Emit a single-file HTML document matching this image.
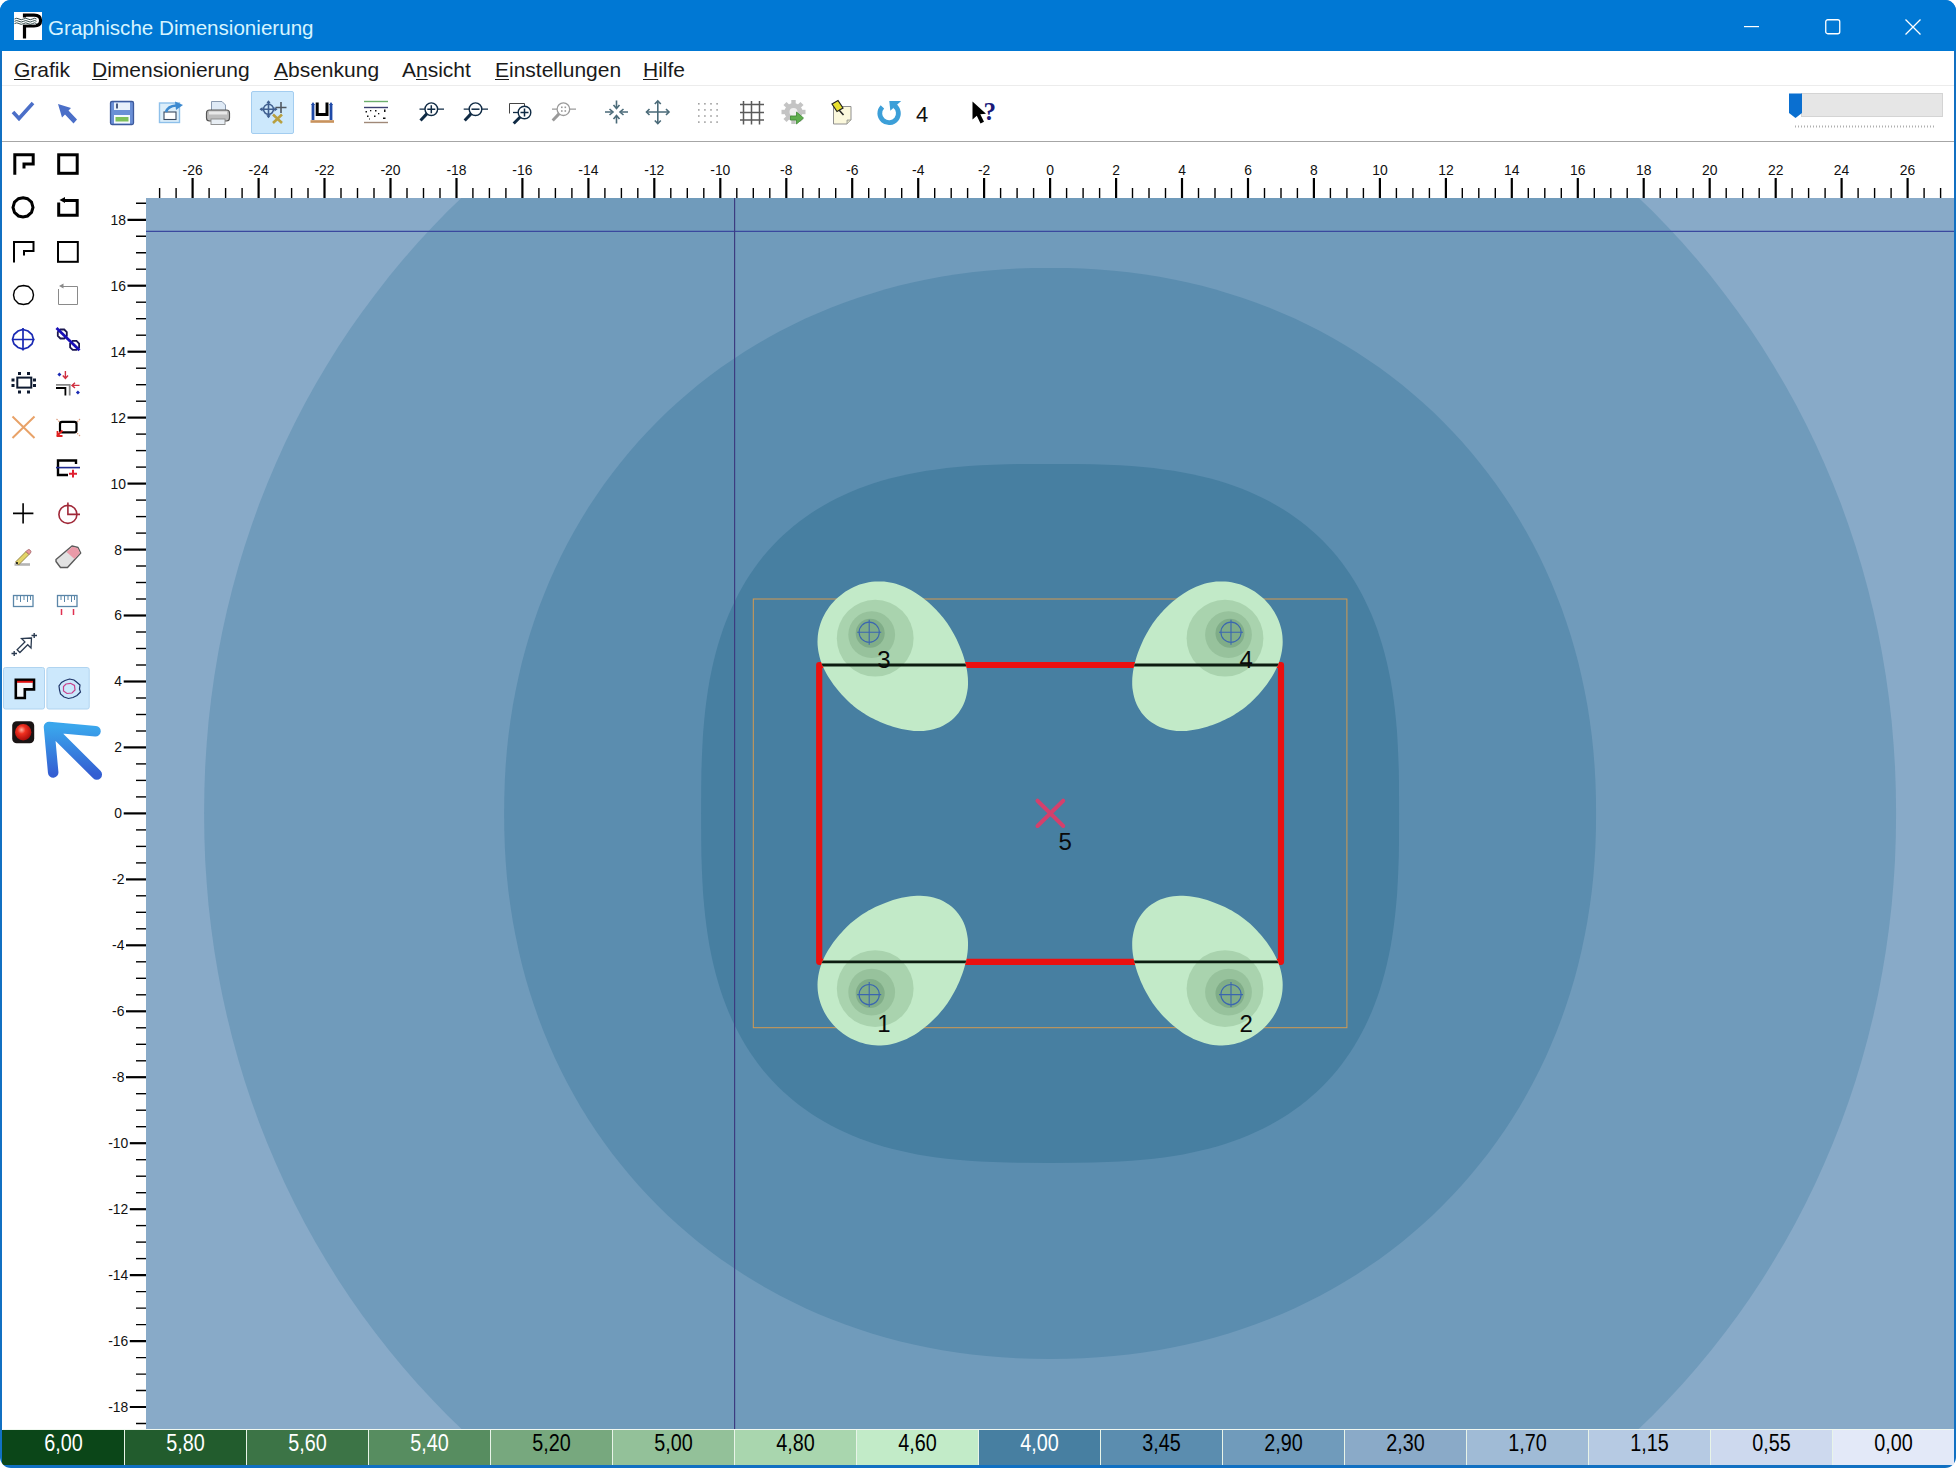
<!DOCTYPE html>
<html><head><meta charset="utf-8"><title>Graphische Dimensionierung</title>
<style>
*{box-sizing:border-box}
html,body{margin:0;padding:0;width:1956px;height:1468px;overflow:hidden;background:#fff;font-family:"Liberation Sans",sans-serif}
.win{position:absolute;left:0;top:0;width:1956px;height:1468px;background:#1170c2;border-radius:11px;overflow:hidden}
.title{position:absolute;left:0;top:0;width:1956px;height:51px;background:#0078d4}
.title .t{position:absolute;left:48px;top:14.5px;font-size:20.6px;color:#d6f4ff;line-height:26px;white-space:nowrap}
.client{position:absolute;left:2px;top:51px;width:1952px;height:1414px;background:#fff}
.menu{position:absolute;left:0;top:0;width:1952px;height:35px;border-bottom:1px solid #ececec}
.menu span{position:absolute;top:5.5px;font-size:21px;color:#1a1a1a;line-height:26px;white-space:nowrap}
.menu u{text-decoration:underline;text-decoration-thickness:1.2px;text-underline-offset:1.6px}
.tb{position:absolute;left:0;top:35px;width:1952px;height:55.5px;border-bottom:1.5px solid #a6a6a6}
svg{position:absolute;overflow:visible}
.lg{position:absolute;top:1430px;height:35px;font-size:23px;line-height:26px;text-align:center;border-left:1px solid #e8f4e8}
.lg span{display:inline-block;transform:scaleX(0.86)}
</style></head><body>
<div class="win">
<div class="title">
<svg style="left:14px;top:12px" width="28" height="28" viewBox="0 0 28 28">
<rect x="0" y="0" width="28" height="28" fill="#fff"/>
<path d="M10.5,26.6 V13.9 H20 Q26.6,13.9 26.6,8.5 Q26.6,3.2 20,3.2 H10.5 V5.5" stroke="#000" stroke-width="3.2" fill="none"/>
<path d="M0,6 H22 V12.5 H0 Z" fill="#fff"/>
<path d="M0.5,7 q2.25,-1.5 4.5,0 t4.5,0 t4.5,0 t4.5,0 t4,0 M0.5,9.3 q2.25,-1.5 4.5,0 t4.5,0 t4.5,0 t4.5,0 t4,0 M0.5,11.6 q2.25,-1.5 4.5,0 t4.5,0 t4.5,0 t4.5,0 t4,0" stroke="#1e3a3a" stroke-width="0.9" fill="none"/>
</svg>
<div class="t">Graphische Dimensionierung</div>
<svg style="left:1744px;top:26px" width="16" height="2"><rect width="15" height="1.2" fill="#fff"/></svg>
<svg style="left:1825px;top:19px" width="16" height="16"><rect x="0.75" y="0.75" width="14" height="14" rx="2" fill="none" stroke="#fff" stroke-width="1.3"/></svg>
<svg style="left:1905px;top:19px" width="16" height="16"><path d="M0.5,0.5 L15.5,15.5 M15.5,0.5 L0.5,15.5" stroke="#fff" stroke-width="1.3"/></svg>
</div>
<div class="client">
<div class="menu">
<span style="left:12px"><u>G</u>rafik</span>
<span style="left:90px"><u>D</u>imensionierung</span>
<span style="left:272px"><u>A</u>bsenkung</span>
<span style="left:400px">A<u>n</u>sicht</span>
<span style="left:493px"><u>E</u>instellungen</span>
<span style="left:641px"><u>H</u>ilfe</span>
</div>
<div class="tb"></div>
</div>


<svg style="left:0;top:0" width="1956" height="150" viewBox="0 0 1956 150">
<!-- check -->
<path d="M13,112 L19,118.5 L33,103" stroke="#4b6fc8" stroke-width="3.6" fill="none" stroke-linejoin="miter"/>
<!-- arrow cursor -->
<path d="M58,104 L71,108 L68.5,110.5 L77,119.5 L73.5,123.5 L65,114.5 L62,117.5 Z" fill="#4b6fc8"/>
<!-- floppy -->
<rect x="110.5" y="101.5" width="23" height="23" rx="1.5" fill="#6a8fd6" stroke="#3d5a9c" stroke-width="1.3"/>
<rect x="114" y="102.5" width="16" height="7.5" fill="#e8f0fa"/>
<rect x="116" y="103.5" width="2" height="5" fill="#4a5a80"/>
<rect x="114" y="115" width="16" height="8.5" fill="#f4f8ff"/>
<rect x="115.5" y="117" width="13" height="4.5" fill="#7ec05a"/>
<!-- export -->
<rect x="159.5" y="103" width="20" height="19.5" fill="#dceefa" stroke="#8ec0ea" stroke-width="1.4"/>
<rect x="164" y="112" width="12" height="7.5" fill="#fff" stroke="#3a4a60" stroke-width="1.1"/>
<path d="M166,112 Q168,106 176,105.5" stroke="#3d8ad0" stroke-width="2.6" fill="none"/>
<path d="M175,101.5 L183,105 L176,110 Z" fill="#3d8ad0"/>
<!-- printer -->
<path d="M211.5,101.5 H222 L225.5,105 V112 H211.5 Z" fill="#dfeaf6" stroke="#8a9ab0" stroke-width="1"/>
<rect x="206.5" y="110" width="23" height="11" rx="3" fill="#bdbdbd" stroke="#555" stroke-width="1.2"/>
<rect x="209" y="111.5" width="18" height="3" fill="#e8e8e8"/>
<rect x="211" y="119" width="14" height="5.5" fill="#e8eef4" stroke="#888" stroke-width="0.9"/>
<!-- selected button -->
<rect x="251.5" y="91.5" width="42" height="42" rx="1.5" fill="#cce8fc" stroke="#a3cdf0" stroke-width="1"/>
<g stroke="#3f5f90" stroke-width="1.6" fill="none"><circle cx="268.5" cy="109.3" r="5"/><path d="M260.5,109.3 H276.5 M268.5,101.3 V117.3"/></g>
<g fill="#3f5f90"><path d="M259.5,109.3 l3,-2.2 v4.4z M277.5,109.3 l-3,-2.2 v4.4z M268.5,100.3 l-2.2,3 h4.4z M268.5,118.3 l-2.2,-3 h4.4z"/></g>
<path d="M275.5,107.5 H286.5 M281,102 V113" stroke="#505860" stroke-width="1.6"/>
<path d="M273,114.5 L282,123 M282,114.5 L273,123" stroke="#b8a040" stroke-width="2.6"/>
<!-- building U -->
<path d="M313,104 V120 M331,104 V120" stroke="#1f4aa8" stroke-width="2.8"/>
<path d="M313,102 l-2,3 h4z M331,102 l-2,3 h4z" fill="#1f4aa8"/>
<path d="M317.2,102.5 V114.5 H327 V102.5" stroke="#000" stroke-width="3" fill="none"/>
<path d="M310.5,121.5 H334" stroke="#c8925c" stroke-width="2.6"/>
<!-- soil -->
<path d="M364,101.5 H388" stroke="#6cae6c" stroke-width="1.4"/>
<path d="M364,107.5 H388" stroke="#3a3e70" stroke-width="1.4"/>
<path d="M364,122.5 H388" stroke="#a08878" stroke-width="1.4"/>
<g fill="#111"><rect x="365.5" y="111" width="1.5" height="1.5"/><rect x="370" y="110" width="1.3" height="1.3"/><rect x="375" y="110" width="1.5" height="1.5"/><rect x="384" y="109.5" width="1.5" height="2.5"/><rect x="367" y="115.5" width="1.5" height="1.5"/><rect x="374" y="115.5" width="1.5" height="1.5"/><rect x="378" y="113" width="1.3" height="1.3"/><rect x="383" y="117.5" width="2.5" height="1.5"/><rect x="369" y="118.5" width="1" height="1"/></g>
<!-- zoom + -->
<g stroke="#0f2a44" fill="none">
<circle cx="431.3" cy="109.2" r="6.3" stroke-width="1.4"/>
<path d="M419.5,109.2 H425 M437.6,109.2 H444" stroke-width="1.3"/>
<path d="M431.3,105.2 V113.2 M427.3,109.2 H435.3" stroke-width="1.5"/>
<path d="M427,113.6 L420.5,120.5" stroke-width="3"/>
</g>
<!-- zoom - -->
<g stroke="#0f2a44" fill="none">
<circle cx="475.5" cy="109.2" r="6.3" stroke-width="1.4"/>
<path d="M463.7,109.2 H469.2 M481.8,109.2 H488" stroke-width="1.3"/>
<path d="M471.5,109.2 H479.5" stroke-width="1.5"/>
<path d="M471.2,113.6 L464.7,120.5" stroke-width="3"/>
</g>
<!-- zoom window -->
<g stroke="#0f2a44" fill="none">
<path d="M509.5,113.5 V103.5 H524.5 V106" stroke-width="1" stroke="#444"/>
<circle cx="524.5" cy="112.5" r="6.3" stroke-width="1.4"/>
<path d="M513,112.5 H518.2" stroke-width="1.3"/>
<path d="M524.5,108.5 V116.5 M520.5,112.5 H528.5" stroke-width="1.5"/>
<path d="M520.2,117 L513.7,123.5" stroke-width="3"/>
</g>
<!-- zoom grey -->
<g stroke="#9a9a9a" fill="none">
<circle cx="563.4" cy="109.2" r="6.3" stroke-width="1.3"/>
<path d="M552,109.2 H557 M569.7,109.2 H576" stroke-width="1.2"/>
<path d="M559.2,113.6 L552.7,120.5" stroke-width="3"/>
</g>
<g fill="#9a9a9a"><rect x="561" y="106.5" width="1.6" height="1.6"/><rect x="564.5" y="106.5" width="1.6" height="1.6"/><rect x="561" y="110.2" width="1.6" height="1.6"/><rect x="564.5" y="110.2" width="1.6" height="1.6"/></g>
<!-- compress arrows -->
<g stroke="#4a6a78" stroke-width="1.6" fill="none">
<path d="M616.5,100.5 V108 M616.5,116 V123.5 M605,112 H612.5 M620.5,112 H628"/>
<path d="M613.5,105 L616.5,108.5 L619.5,105 M613.5,119 L616.5,115.5 L619.5,119 M609.5,109 L613,112 L609.5,115 M623.5,109 L620,112 L623.5,115"/>
</g>
<!-- move arrows -->
<g stroke="#4a6a78" stroke-width="1.6" fill="none">
<path d="M657.8,101 V123.5 M646.5,112 H669"/>
<path d="M654.8,104 L657.8,101 L660.8,104 M654.8,120.5 L657.8,123.5 L660.8,120.5 M649.5,109 L646.5,112 L649.5,115 M666,109 L669,112 L666,115"/>
</g>
<!-- dots -->
<g fill="#a0a0a0">
<rect x="698.0" y="103.0" width="1.6" height="1.6"/><rect x="698.0" y="109.1" width="1.6" height="1.6"/><rect x="698.0" y="115.2" width="1.6" height="1.6"/><rect x="698.0" y="121.3" width="1.6" height="1.6"/><rect x="704.1" y="103.0" width="1.6" height="1.6"/><rect x="704.1" y="109.1" width="1.6" height="1.6"/><rect x="704.1" y="115.2" width="1.6" height="1.6"/><rect x="704.1" y="121.3" width="1.6" height="1.6"/><rect x="710.2" y="103.0" width="1.6" height="1.6"/><rect x="710.2" y="109.1" width="1.6" height="1.6"/><rect x="710.2" y="115.2" width="1.6" height="1.6"/><rect x="710.2" y="121.3" width="1.6" height="1.6"/><rect x="716.3" y="103.0" width="1.6" height="1.6"/><rect x="716.3" y="109.1" width="1.6" height="1.6"/><rect x="716.3" y="115.2" width="1.6" height="1.6"/><rect x="716.3" y="121.3" width="1.6" height="1.6"/>
</g>
<!-- grid -->
<g stroke="#5a5a5a" stroke-width="1.5">
<path d="M743.5,101 V124.5 M751.5,101 V124.5 M759.5,101 V124.5 M740,104.5 H764 M740,112.5 H764 M740,120 H764"/>
</g>
<!-- gear -->
<g transform="translate(793.5,112)">
<circle r="9" fill="#c4c4c4"/>
<rect x="-2.2" y="-12" width="4.4" height="5" fill="#c4c4c4" transform="rotate(0)"/><rect x="-2.2" y="-12" width="4.4" height="5" fill="#c4c4c4" transform="rotate(45)"/><rect x="-2.2" y="-12" width="4.4" height="5" fill="#c4c4c4" transform="rotate(90)"/><rect x="-2.2" y="-12" width="4.4" height="5" fill="#c4c4c4" transform="rotate(135)"/><rect x="-2.2" y="-12" width="4.4" height="5" fill="#c4c4c4" transform="rotate(180)"/><rect x="-2.2" y="-12" width="4.4" height="5" fill="#c4c4c4" transform="rotate(225)"/><rect x="-2.2" y="-12" width="4.4" height="5" fill="#c4c4c4" transform="rotate(270)"/><rect x="-2.2" y="-12" width="4.4" height="5" fill="#c4c4c4" transform="rotate(315)"/>
<circle r="4" fill="#f0f0f0"/>
<path d="M-3,4 h6 v-4 l7,6 l-7,6 v-4 h-6 z" fill="#5fae4e" stroke="#3f8a34" stroke-width="0.8"/>
</g>
<!-- note -->
<path d="M833.5,106.5 H851 V120 L847,124 H833.5 Z" fill="#fbf8dc" stroke="#909090" stroke-width="1"/>
<path d="M851,120 L847,120 L847,124" fill="#dcdcc0" stroke="#909090" stroke-width="0.8"/>
<path d="M832,104 L838,100.5 L843,108 L837,111.5 Z" fill="#e8e030" stroke="#222" stroke-width="1.2"/>
<path d="M839,110 L843.5,115" stroke="#222" stroke-width="1.5"/>
<!-- refresh -->
<path d="M882.4,106.9 A9.3,9.3 0 1 0 894.5,105.8" stroke="#3c9fd8" stroke-width="4.8" fill="none"/>
<path d="M889.3,101 L901.2,101 L890.3,110.8 Z" fill="#3c9fd8"/>
<!-- help cursor -->
<path d="M972.5,101.5 L972.5,119.5 L976.8,115.8 L980.5,123.5 L984,121.8 L980.3,114.3 L986,113.8 Z" fill="#000"/>
<text x="983.5" y="120" font-family="Liberation Serif" font-weight="bold" font-size="25" fill="#1a1a7a">?</text>
<!-- slider -->
<rect x="1801.5" y="93.5" width="141" height="23" fill="#e6e6e6" stroke="#d4d4d4" stroke-width="1"/>
<path d="M1789,93.5 H1802 V113 L1795.5,118 L1789,113 Z" fill="#0a6fd0"/>
<path d="M1795,126.5 H1936" stroke="#b0b0b0" stroke-width="2" stroke-dasharray="1,2"/>
</svg>
<div style="position:absolute;left:916px;top:101.5px;font-family:'Liberation Sans',sans-serif;font-size:22px;line-height:26px;color:#111">4</div>


<svg style="left:0;top:0" width="150" height="800" viewBox="0 0 150 800">
<defs><linearGradient id="ag" x1="0" y1="0" x2="0" y2="1"><stop offset="0" stop-color="#3aa6ec"/><stop offset="1" stop-color="#345ed2"/></linearGradient>
<radialGradient id="rb" cx="0.4" cy="0.35" r="0.7"><stop offset="0" stop-color="#ffb0a0"/><stop offset="0.35" stop-color="#f03020"/><stop offset="1" stop-color="#a00808"/></radialGradient></defs>
<!-- row1 -->
<path d="M14.8,174.7 V154.8 H33.2 V164 H24 V168.6" stroke="#000" stroke-width="3" fill="none"/>
<rect x="58.7" y="154.8" width="18.5" height="18.5" stroke="#000" stroke-width="3" fill="none"/>
<!-- row2 -->
<path d="M23,197.8 L27.5,198.7 L31.5,202 L33,207.4 L31.5,212.5 L27.5,216 L23,217 L18.5,216 L14.5,212.5 L13,207.4 L14.5,202 L18.5,198.7 Z" stroke="#000" stroke-width="3" fill="none"/>
<path d="M64,200.6 H77.2 V215.2 H58.7 V202.5" stroke="#000" stroke-width="3" fill="none"/>
<path d="M59.5,200 L65,197 V203 Z" fill="#000"/>
<!-- row3 -->
<path d="M14,262.6 V242 H33.5 V251 H24 V255.5" stroke="#000" stroke-width="2" fill="none"/>
<rect x="58" y="242" width="19.8" height="19.8" stroke="#000" stroke-width="2" fill="none"/>
<!-- row4 -->
<path d="M23.5,285.5 L28.5,286.5 L32.5,290.5 L33.5,295 L32.5,299.5 L28.5,303.5 L23.5,304.5 L18.5,303.5 L14.5,299.5 L13.5,295 L14.5,290.5 L18.5,286.5 Z" stroke="#000" stroke-width="1.4" fill="none"/>
<path d="M63,286.5 H77.5 V304.5 H58.5 V289" stroke="#8a8a8a" stroke-width="1" fill="none"/>
<path d="M59,286 L63.5,283.5 V288.5 Z" fill="#8a8a8a"/>
<!-- row5 -->
<g stroke="#1a2ab4" stroke-width="1.7" fill="none">
<path d="M23,329.5 L28,331 L32,334.5 L33.5,339.5 L32,344 L28,347.5 L23,349 L18,347.5 L14,344 L12.5,339.5 L14,334.5 L18,331 Z"/>
<path d="M12,339.5 H34.5 M23,328 V350.5"/>
</g>
<g fill="none">
<path d="M66.8,335.9 L64.2,338.5 L60.4,338.5 L57.8,335.9 L57.8,332.1 L60.4,329.5 L64.2,329.5 L66.8,332.1Z M79.1,347.3 L76.5,349.9 L72.7,349.9 L70.1,347.3 L70.1,343.5 L72.7,340.9 L76.5,340.9 L79.1,343.5Z" stroke="#1c1850" stroke-width="1.8"/>
<path d="M56.5,328 L79.5,350.3" stroke="#1a10b8" stroke-width="2.8"/>
</g>
<!-- row6 -->
<rect x="17.3" y="377.6" width="14" height="10" stroke="#0e1a30" stroke-width="2" fill="none"/>
<g fill="#0e1a30">
<rect x="18" y="372" width="3" height="3"/><rect x="27" y="372" width="3" height="3"/>
<rect x="11.5" y="378.5" width="3" height="3"/><rect x="11.5" y="384" width="3" height="3"/>
<rect x="33" y="378.5" width="3" height="3"/><rect x="33" y="384" width="3" height="3"/>
<rect x="18" y="390.5" width="3" height="3"/><rect x="27" y="390.5" width="3" height="3"/>
</g>
<path d="M56,388 H65.4 V395.5" stroke="#000" stroke-width="1.8" fill="none"/>
<path d="M56,384.8 H69.7 V395.5" stroke="#888" stroke-width="1.8" fill="none"/>
<path d="M65.4,371 V378 M62.8,375.5 L65.4,378.5 L68,375.5" stroke="#d03040" stroke-width="1.4" fill="none"/>
<path d="M72.5,385.4 H79.5 M75,382.8 L72,385.4 L75,388" stroke="#d03040" stroke-width="1.4" fill="none"/>
<path d="M59.4,372.5 l2,2 l-2,2 l-2,-2 z M77.9,390.4 l2,2 l-2,2 l-2,-2 z" fill="#1a2ab4"/>
<!-- row7 -->
<path d="M12.5,416.5 L34.5,438 M34.5,416.5 L12.5,438" stroke="#e8a268" stroke-width="2" fill="none"/>
<path d="M56.5,419 L62,424 M80,419 L75,424 M56.5,436 L62,431 M80,436 L75,431" stroke="#e0a080" stroke-width="1.2" stroke-dasharray="1.5,1" fill="none"/>
<rect x="60" y="421.8" width="16.5" height="10.5" rx="2" stroke="#000" stroke-width="2.2" fill="none"/>
<path d="M57,436 L62.5,430.5 M57.5,431 V436 H62.5" stroke="#e02020" stroke-width="1.8" fill="none"/>
<!-- row8 -->
<path d="M76,464 V460.5 H58 V475 H68" stroke="#000" stroke-width="2.4" fill="none"/>
<path d="M56,467.6 H80" stroke="#1f2a90" stroke-width="1.6"/>
<path d="M73,469.8 V477.6 M69,473.7 H77" stroke="#e02030" stroke-width="2"/>
<!-- row9 -->
<path d="M13,513.4 H33.4 M23.1,503.2 V523.4" stroke="#000" stroke-width="1.6"/>
<g stroke="#a02838" stroke-width="1.6" fill="none"><circle cx="67.9" cy="514.4" r="9"/><path d="M67.9,502.5 V514.4 H80"/></g>
<!-- row10 -->
<path d="M14.5,564.5 H30" stroke="#b4b4b4" stroke-width="2.6"/>
<path d="M15.5,562 L26,551.5 L29,554.5 L18.5,565 Z" fill="#e4d468" stroke="#8a7a40" stroke-width="0.9"/>
<path d="M26,551.5 L27.5,550 Q29,549 30,550 L30.5,550.5 Q31.5,551.5 30.5,553 L29,554.5 Z" fill="#e898a0" stroke="#a06060" stroke-width="0.8"/>
<circle cx="17" cy="563" r="1.1" fill="#111"/>
<path d="M56,559.5 L72,546 L78,547.5 L80.7,553 L67.5,567.5 L60.5,567.5 L56,561.5 Z" fill="#e2e2e2" stroke="#5a5a5a" stroke-width="1.4" stroke-linejoin="round"/>
<path d="M72.3,546.7 L77.6,548 L80,553 L74.5,559 L66.5,552 Z" fill="#ea9aa8"/>
<!-- row11 -->
<rect x="13.5" y="595.5" width="19.5" height="11" stroke="#5a86a8" stroke-width="1.3" fill="#fff"/>
<path d="M17,596 V600 M20.5,596 V602 M24,596 V600 M27.5,596 V602 M30.5,596 V600" stroke="#5a86a8" stroke-width="1"/>
<rect x="57.5" y="595.5" width="19.5" height="11" stroke="#5a86a8" stroke-width="1.3" fill="#fff"/>
<path d="M61,596 V600 M64.5,596 V602 M68,596 V600 M71.5,596 V602 M74.5,596 V600" stroke="#5a86a8" stroke-width="1"/>
<path d="M61.5,609 V615 M73.5,609 V615" stroke="#e03050" stroke-width="1.5"/>
<!-- row12 -->
<path d="M31.5,638 L21.5,638.5 L24.9,641.9 L17.1,649.7 L19.9,652.5 L27.7,644.7 L31,648 Z" fill="#fff" stroke="#2a3a50" stroke-width="1.3" stroke-linejoin="miter"/>
<path d="M11.5,653.5 H17 M14.2,651 V656 M31.5,635.5 H37 M34.2,633 V638" stroke="#2a3a50" stroke-width="1.4"/>
<!-- row13 selected -->
<rect x="3.5" y="667.5" width="41" height="41.5" rx="2" fill="#cce8fc" stroke="#b0d4f0" stroke-width="1"/>
<rect x="46.9" y="667.5" width="42.3" height="41.5" rx="2" fill="#cce8fc" stroke="#b0d4f0" stroke-width="1"/>
<path d="M15.8,679.8 H34 V689.4 H24.8 V698 H15.8 Z" stroke="#000" stroke-width="2.6" fill="#f4f8fc"/>
<path d="M17,681.8 H33" stroke="#e01010" stroke-width="2"/>
<path d="M69.5,679 L74,680 L76.5,682 L80,685 L79.5,689 L80.5,692 L77,695.5 L73,697.5 L68.5,698.5 L64,697 L60.5,694 L59.5,690 L59,686 L61.5,682.5 L65,680.5 Z" stroke="#1e3468" stroke-width="1.2" fill="none"/>
<path d="M66,684 L70.5,683.3 L74.5,685.5 L75,690 L72,693 L67,693.5 L63.5,691 L63.5,686.5 Z" stroke="#c8408a" stroke-width="1.2" fill="none"/>
<!-- row14 -->
<rect x="12.2" y="721.3" width="22" height="22" rx="4.5" fill="#1a1414"/>
<circle cx="23.2" cy="732.3" r="8.2" fill="url(#rb)"/>
<!-- big blue arrow -->
<path d="M95.5,731.2 L49,727 L53.2,772.5 M49,727 L96.8,774.5" stroke="url(#ag)" stroke-width="10.5" stroke-linecap="round" stroke-linejoin="round" fill="none"/>
</svg>

<svg style="left:0;top:0" width="1956" height="1468" viewBox="0 0 1956 1468">
<defs><clipPath id="cv"><rect x="146" y="198" width="1808" height="1231"/></clipPath></defs>
<g clip-path="url(#cv)">
<rect x="146" y="198" width="1808" height="1231" fill="#88aac8"/>
<path d="M1896.1,813.4 L1895.8,837.2 L1895.0,860.3 L1893.5,883.2 L1891.6,905.8 L1889.0,928.3 L1885.9,950.6 L1882.2,972.8 L1878.0,994.8 L1873.2,1016.6 L1867.8,1038.2 L1861.9,1059.7 L1855.5,1080.9 L1848.5,1101.9 L1841.0,1122.7 L1832.9,1143.3 L1824.3,1163.6 L1815.2,1183.7 L1805.6,1203.5 L1795.5,1223.0 L1784.8,1242.2 L1773.7,1261.1 L1762.1,1279.7 L1750.0,1298.0 L1737.4,1315.9 L1724.3,1333.4 L1710.8,1350.7 L1696.9,1367.5 L1682.5,1384.0 L1667.6,1400.0 L1652.4,1415.7 L1636.7,1430.9 L1620.7,1445.8 L1604.2,1460.2 L1587.4,1474.1 L1570.1,1487.6 L1552.6,1500.7 L1534.7,1513.3 L1516.4,1525.4 L1497.8,1537.0 L1478.9,1548.1 L1459.7,1558.8 L1440.2,1568.9 L1420.4,1578.5 L1400.3,1587.6 L1380.0,1596.2 L1359.4,1604.3 L1338.6,1611.8 L1317.6,1618.8 L1296.4,1625.2 L1274.9,1631.1 L1253.3,1636.5 L1231.5,1641.3 L1209.5,1645.5 L1187.3,1649.2 L1165.0,1652.3 L1142.5,1654.9 L1119.9,1656.8 L1097.0,1658.3 L1073.9,1659.1 L1050.1,1659.4 L1026.3,1659.1 L1003.2,1658.3 L980.3,1656.8 L957.7,1654.9 L935.2,1652.3 L912.9,1649.2 L890.7,1645.5 L868.7,1641.3 L846.9,1636.5 L825.3,1631.1 L803.8,1625.2 L782.6,1618.8 L761.6,1611.8 L740.8,1604.3 L720.2,1596.2 L699.9,1587.6 L679.8,1578.5 L660.0,1568.9 L640.5,1558.8 L621.3,1548.1 L602.4,1537.0 L583.8,1525.4 L565.5,1513.3 L547.6,1500.7 L530.1,1487.6 L512.8,1474.1 L496.0,1460.2 L479.5,1445.8 L463.5,1430.9 L447.8,1415.7 L432.6,1400.0 L417.7,1384.0 L403.3,1367.5 L389.4,1350.7 L375.9,1333.4 L362.8,1315.9 L350.2,1298.0 L338.1,1279.7 L326.5,1261.1 L315.4,1242.2 L304.7,1223.0 L294.6,1203.5 L285.0,1183.7 L275.9,1163.6 L267.3,1143.3 L259.2,1122.7 L251.7,1101.9 L244.7,1080.9 L238.3,1059.7 L232.4,1038.2 L227.0,1016.6 L222.2,994.8 L218.0,972.8 L214.3,950.6 L211.2,928.3 L208.6,905.8 L206.7,883.2 L205.2,860.3 L204.4,837.2 L204.1,813.4 L204.4,789.6 L205.2,766.5 L206.7,743.6 L208.6,721.0 L211.2,698.5 L214.3,676.2 L218.0,654.0 L222.2,632.0 L227.0,610.2 L232.4,588.6 L238.3,567.1 L244.7,545.9 L251.7,524.9 L259.2,504.1 L267.3,483.5 L275.9,463.2 L285.0,443.1 L294.6,423.3 L304.7,403.8 L315.4,384.6 L326.5,365.7 L338.1,347.1 L350.2,328.8 L362.8,310.9 L375.9,293.4 L389.4,276.1 L403.3,259.3 L417.7,242.8 L432.6,226.8 L447.8,211.1 L463.5,195.9 L479.5,181.0 L496.0,166.6 L512.8,152.7 L530.1,139.2 L547.6,126.1 L565.5,113.5 L583.8,101.4 L602.4,89.8 L621.3,78.7 L640.5,68.0 L660.0,57.9 L679.8,48.3 L699.9,39.2 L720.2,30.6 L740.8,22.5 L761.6,15.0 L782.6,8.0 L803.8,1.6 L825.3,-4.3 L846.9,-9.7 L868.7,-14.5 L890.7,-18.7 L912.9,-22.4 L935.2,-25.5 L957.7,-28.1 L980.3,-30.0 L1003.2,-31.5 L1026.3,-32.3 L1050.1,-32.6 L1073.9,-32.3 L1097.0,-31.5 L1119.9,-30.0 L1142.5,-28.1 L1165.0,-25.5 L1187.3,-22.4 L1209.5,-18.7 L1231.5,-14.5 L1253.3,-9.7 L1274.9,-4.3 L1296.4,1.6 L1317.6,8.0 L1338.6,15.0 L1359.4,22.5 L1380.0,30.6 L1400.3,39.2 L1420.4,48.3 L1440.2,57.9 L1459.7,68.0 L1478.9,78.7 L1497.8,89.8 L1516.4,101.4 L1534.7,113.5 L1552.6,126.1 L1570.1,139.2 L1587.4,152.7 L1604.2,166.6 L1620.7,181.0 L1636.7,195.9 L1652.4,211.1 L1667.6,226.8 L1682.5,242.8 L1696.9,259.3 L1710.8,276.1 L1724.3,293.4 L1737.4,310.9 L1750.0,328.8 L1762.1,347.1 L1773.7,365.7 L1784.8,384.6 L1795.5,403.8 L1805.6,423.3 L1815.2,443.1 L1824.3,463.2 L1832.9,483.5 L1841.0,504.1 L1848.5,524.9 L1855.5,545.9 L1861.9,567.1 L1867.8,588.6 L1873.2,610.2 L1878.0,632.0 L1882.2,654.0 L1885.9,676.2 L1889.0,698.5 L1891.6,721.0 L1893.5,743.6 L1895.0,766.5 L1895.8,789.6Z" fill="#709bbb"/>
<path d="M1596.1,813.4 L1595.9,830.4 L1595.4,846.3 L1594.5,861.7 L1593.3,876.9 L1591.7,891.9 L1589.7,906.6 L1587.4,921.2 L1584.7,935.6 L1581.7,949.9 L1578.4,964.0 L1574.7,977.9 L1570.6,991.7 L1566.2,1005.3 L1561.5,1018.7 L1556.4,1031.9 L1551.0,1045.0 L1545.3,1057.9 L1539.3,1070.5 L1532.9,1083.0 L1526.2,1095.3 L1519.2,1107.4 L1511.9,1119.2 L1504.2,1130.9 L1496.3,1142.3 L1488.1,1153.4 L1479.5,1164.3 L1470.7,1175.0 L1461.6,1185.5 L1452.3,1195.6 L1442.6,1205.5 L1432.7,1215.2 L1422.5,1224.6 L1412.1,1233.6 L1401.4,1242.5 L1390.4,1251.0 L1379.3,1259.2 L1367.8,1267.1 L1356.2,1274.7 L1344.3,1282.1 L1332.3,1289.1 L1320.0,1295.8 L1307.5,1302.1 L1294.8,1308.2 L1281.9,1313.9 L1268.8,1319.3 L1255.6,1324.3 L1242.1,1329.1 L1228.5,1333.4 L1214.8,1337.5 L1200.8,1341.2 L1186.7,1344.5 L1172.4,1347.5 L1158.0,1350.2 L1143.4,1352.5 L1128.6,1354.5 L1113.7,1356.1 L1098.5,1357.3 L1083.0,1358.2 L1067.1,1358.7 L1050.1,1358.9 L1033.1,1358.7 L1017.2,1358.2 L1001.7,1357.3 L986.5,1356.1 L971.6,1354.5 L956.8,1352.5 L942.2,1350.2 L927.8,1347.5 L913.5,1344.5 L899.4,1341.2 L885.4,1337.5 L871.7,1333.4 L858.1,1329.1 L844.6,1324.3 L831.4,1319.3 L818.3,1313.9 L805.4,1308.2 L792.7,1302.1 L780.2,1295.8 L767.9,1289.1 L755.9,1282.1 L744.0,1274.7 L732.4,1267.1 L720.9,1259.2 L709.8,1251.0 L698.8,1242.5 L688.1,1233.6 L677.7,1224.6 L667.5,1215.2 L657.6,1205.5 L647.9,1195.6 L638.6,1185.5 L629.5,1175.0 L620.7,1164.3 L612.1,1153.4 L603.9,1142.3 L596.0,1130.9 L588.3,1119.2 L581.0,1107.4 L574.0,1095.3 L567.3,1083.0 L560.9,1070.5 L554.9,1057.9 L549.2,1045.0 L543.8,1031.9 L538.7,1018.7 L534.0,1005.3 L529.6,991.7 L525.5,977.9 L521.8,964.0 L518.5,949.9 L515.5,935.6 L512.8,921.2 L510.5,906.6 L508.5,891.9 L506.9,876.9 L505.7,861.7 L504.8,846.3 L504.3,830.4 L504.1,813.4 L504.3,796.4 L504.8,780.5 L505.7,765.1 L506.9,749.9 L508.5,734.9 L510.5,720.2 L512.8,705.6 L515.5,691.2 L518.5,676.9 L521.8,662.8 L525.5,648.9 L529.6,635.1 L534.0,621.5 L538.7,608.1 L543.8,594.9 L549.2,581.8 L554.9,568.9 L560.9,556.3 L567.3,543.8 L574.0,531.5 L581.0,519.4 L588.3,507.6 L596.0,495.9 L603.9,484.5 L612.1,473.4 L620.7,462.5 L629.5,451.8 L638.6,441.3 L647.9,431.2 L657.6,421.3 L667.5,411.6 L677.7,402.2 L688.1,393.2 L698.8,384.3 L709.8,375.8 L720.9,367.6 L732.4,359.7 L744.0,352.1 L755.9,344.7 L767.9,337.7 L780.2,331.0 L792.7,324.7 L805.4,318.6 L818.3,312.9 L831.4,307.5 L844.6,302.5 L858.1,297.7 L871.7,293.4 L885.4,289.3 L899.4,285.6 L913.5,282.3 L927.8,279.3 L942.2,276.6 L956.8,274.3 L971.6,272.3 L986.5,270.7 L1001.7,269.5 L1017.2,268.6 L1033.1,268.1 L1050.1,267.9 L1067.1,268.1 L1083.0,268.6 L1098.5,269.5 L1113.7,270.7 L1128.6,272.3 L1143.4,274.3 L1158.0,276.6 L1172.4,279.3 L1186.7,282.3 L1200.8,285.6 L1214.8,289.3 L1228.5,293.4 L1242.1,297.7 L1255.6,302.5 L1268.8,307.5 L1281.9,312.9 L1294.8,318.6 L1307.5,324.7 L1320.0,331.0 L1332.3,337.7 L1344.3,344.7 L1356.2,352.1 L1367.8,359.7 L1379.3,367.6 L1390.4,375.8 L1401.4,384.3 L1412.1,393.2 L1422.5,402.2 L1432.7,411.6 L1442.6,421.3 L1452.3,431.2 L1461.6,441.3 L1470.7,451.8 L1479.5,462.5 L1488.1,473.4 L1496.3,484.5 L1504.2,495.9 L1511.9,507.6 L1519.2,519.4 L1526.2,531.5 L1532.9,543.8 L1539.3,556.3 L1545.3,568.9 L1551.0,581.8 L1556.4,594.9 L1561.5,608.1 L1566.2,621.5 L1570.6,635.1 L1574.7,648.9 L1578.4,662.8 L1581.7,676.9 L1584.7,691.2 L1587.4,705.6 L1589.7,720.2 L1591.7,734.9 L1593.3,749.9 L1594.5,765.1 L1595.4,780.5 L1595.9,796.4Z" fill="#5b8daf"/>
<path d="M1399.1,813.4 L1399.0,839.3 L1398.8,855.9 L1398.3,870.1 L1397.7,883.0 L1397.0,895.0 L1396.0,906.3 L1394.9,917.0 L1393.6,927.2 L1392.2,937.0 L1390.6,946.5 L1388.8,955.6 L1386.8,964.5 L1384.7,973.0 L1382.4,981.3 L1379.9,989.4 L1377.3,997.2 L1374.5,1004.8 L1371.5,1012.2 L1368.3,1019.4 L1365.0,1026.4 L1361.5,1033.2 L1357.9,1039.8 L1354.1,1046.3 L1350.1,1052.5 L1345.9,1058.6 L1341.6,1064.5 L1337.1,1070.2 L1332.4,1075.7 L1327.6,1081.1 L1322.6,1086.3 L1317.4,1091.3 L1312.0,1096.1 L1306.5,1100.8 L1300.8,1105.3 L1294.9,1109.6 L1288.9,1113.8 L1282.6,1117.8 L1276.2,1121.6 L1269.6,1125.3 L1262.8,1128.8 L1255.8,1132.1 L1248.6,1135.2 L1241.3,1138.2 L1233.7,1141.0 L1225.8,1143.7 L1217.8,1146.2 L1209.5,1148.5 L1200.9,1150.6 L1192.1,1152.6 L1183.0,1154.4 L1173.6,1156.0 L1163.8,1157.4 L1153.5,1158.7 L1142.9,1159.8 L1131.6,1160.8 L1119.6,1161.5 L1106.8,1162.1 L1092.5,1162.6 L1076.0,1162.8 L1050.1,1162.9 L1024.2,1162.8 L1007.7,1162.6 L993.4,1162.1 L980.6,1161.5 L968.6,1160.8 L957.3,1159.8 L946.7,1158.7 L936.4,1157.4 L926.6,1156.0 L917.2,1154.4 L908.1,1152.6 L899.3,1150.6 L890.7,1148.5 L882.4,1146.2 L874.4,1143.7 L866.5,1141.0 L858.9,1138.2 L851.6,1135.2 L844.4,1132.1 L837.4,1128.8 L830.6,1125.3 L824.0,1121.6 L817.6,1117.8 L811.3,1113.8 L805.3,1109.6 L799.4,1105.3 L793.7,1100.8 L788.2,1096.1 L782.8,1091.3 L777.6,1086.3 L772.6,1081.1 L767.8,1075.7 L763.1,1070.2 L758.6,1064.5 L754.3,1058.6 L750.1,1052.5 L746.1,1046.3 L742.3,1039.8 L738.7,1033.2 L735.2,1026.4 L731.9,1019.4 L728.7,1012.2 L725.7,1004.8 L722.9,997.2 L720.3,989.4 L717.8,981.3 L715.5,973.0 L713.4,964.5 L711.4,955.6 L709.6,946.5 L708.0,937.0 L706.6,927.2 L705.3,917.0 L704.2,906.3 L703.2,895.0 L702.5,883.0 L701.9,870.1 L701.4,855.9 L701.2,839.3 L701.1,813.4 L701.2,787.5 L701.4,770.9 L701.9,756.7 L702.5,743.8 L703.2,731.8 L704.2,720.5 L705.3,709.8 L706.6,699.6 L708.0,689.8 L709.6,680.3 L711.4,671.2 L713.4,662.3 L715.5,653.8 L717.8,645.5 L720.3,637.4 L722.9,629.6 L725.7,622.0 L728.7,614.6 L731.9,607.4 L735.2,600.4 L738.7,593.6 L742.3,587.0 L746.1,580.5 L750.1,574.3 L754.3,568.2 L758.6,562.3 L763.1,556.6 L767.8,551.1 L772.6,545.7 L777.6,540.5 L782.8,535.5 L788.2,530.7 L793.7,526.0 L799.4,521.5 L805.3,517.2 L811.3,513.0 L817.6,509.0 L824.0,505.2 L830.6,501.5 L837.4,498.0 L844.4,494.7 L851.6,491.6 L858.9,488.6 L866.5,485.8 L874.4,483.1 L882.4,480.6 L890.7,478.3 L899.3,476.2 L908.1,474.2 L917.2,472.4 L926.6,470.8 L936.4,469.4 L946.7,468.1 L957.3,467.0 L968.6,466.0 L980.6,465.3 L993.4,464.7 L1007.7,464.2 L1024.2,464.0 L1050.1,463.9 L1076.0,464.0 L1092.5,464.2 L1106.8,464.7 L1119.6,465.3 L1131.6,466.0 L1142.9,467.0 L1153.5,468.1 L1163.8,469.4 L1173.6,470.8 L1183.0,472.4 L1192.1,474.2 L1200.9,476.2 L1209.5,478.3 L1217.8,480.6 L1225.8,483.1 L1233.7,485.8 L1241.3,488.6 L1248.6,491.6 L1255.8,494.7 L1262.8,498.0 L1269.6,501.5 L1276.2,505.2 L1282.6,509.0 L1288.9,513.0 L1294.9,517.2 L1300.8,521.5 L1306.5,526.0 L1312.0,530.7 L1317.4,535.5 L1322.6,540.5 L1327.6,545.7 L1332.4,551.1 L1337.1,556.6 L1341.6,562.3 L1345.9,568.2 L1350.1,574.3 L1354.1,580.5 L1357.9,587.0 L1361.5,593.6 L1365.0,600.4 L1368.3,607.4 L1371.5,614.6 L1374.5,622.0 L1377.3,629.6 L1379.9,637.4 L1382.4,645.5 L1384.7,653.8 L1386.8,662.3 L1388.8,671.2 L1390.6,680.3 L1392.2,689.8 L1393.6,699.6 L1394.9,709.8 L1396.0,720.5 L1397.0,731.8 L1397.7,743.8 L1398.3,756.7 L1398.8,770.9 L1399.0,787.5Z" fill="#477fa1"/>
<clipPath id="eggs"><path d="M963.7,657.0 L964.5,659.8 L965.3,662.7 L966.0,665.6 L966.7,668.7 L967.2,671.8 L967.6,674.9 L967.9,678.1 L968.0,681.4 L968.0,684.7 L967.8,688.0 L967.3,691.3 L966.7,694.6 L965.9,697.8 L964.9,701.0 L963.6,704.2 L962.1,707.2 L960.4,710.1 L958.5,712.9 L956.3,715.5 L954.0,718.0 L951.5,720.2 L948.8,722.3 L945.9,724.1 L943.0,725.8 L939.9,727.2 L936.7,728.3 L933.5,729.3 L930.2,730.0 L926.9,730.5 L923.6,730.9 L920.3,731.0 L917.0,731.0 L913.8,730.9 L910.7,730.6 L907.5,730.1 L904.5,729.6 L901.5,729.0 L898.6,728.3 L895.8,727.5 L893.0,726.7 L890.3,725.8 L887.7,724.9 L885.1,723.9 L882.6,722.9 L880.1,721.9 L877.7,720.8 L875.3,719.7 L873.0,718.6 L870.7,717.4 L868.5,716.2 L866.3,714.9 L864.2,713.6 L862.1,712.2 L860.0,710.8 L858.0,709.4 L856.0,707.9 L854.1,706.4 L852.2,704.8 L850.3,703.2 L848.5,701.5 L846.7,699.8 L845.0,698.0 L843.3,696.2 L841.6,694.4 L839.9,692.5 L838.2,690.6 L836.6,688.6 L835.0,686.5 L833.4,684.5 L831.9,682.3 L830.4,680.1 L828.9,677.8 L827.5,675.5 L826.1,673.1 L824.8,670.6 L823.6,668.0 L822.4,665.4 L821.3,662.6 L820.4,659.9 L819.6,657.0 L818.9,654.1 L818.3,651.1 L817.9,648.1 L817.6,645.1 L817.5,642.0 L817.6,638.9 L817.8,635.8 L818.2,632.7 L818.8,629.6 L819.6,626.6 L820.5,623.6 L821.6,620.6 L822.8,617.7 L824.2,614.9 L825.8,612.1 L827.5,609.4 L829.3,606.8 L831.3,604.3 L833.4,601.9 L835.6,599.6 L837.9,597.4 L840.4,595.4 L842.9,593.4 L845.5,591.6 L848.2,589.9 L850.9,588.4 L853.8,587.0 L856.7,585.7 L859.6,584.6 L862.6,583.7 L865.7,582.9 L868.7,582.3 L871.8,581.8 L874.9,581.5 L878.0,581.4 L881.0,581.4 L884.1,581.6 L887.1,581.9 L890.1,582.4 L893.0,583.0 L895.9,583.8 L898.7,584.7 L901.4,585.7 L904.1,586.8 L906.7,587.9 L909.3,589.2 L911.7,590.5 L914.1,591.9 L916.5,593.4 L918.7,594.9 L920.9,596.5 L923.0,598.1 L925.1,599.7 L927.1,601.3 L929.1,603.0 L931.0,604.7 L932.8,606.5 L934.6,608.3 L936.4,610.1 L938.1,611.9 L939.8,613.8 L941.4,615.7 L943.0,617.6 L944.5,619.6 L946.0,621.6 L947.5,623.6 L948.9,625.7 L950.2,627.8 L951.5,630.0 L952.8,632.2 L954.1,634.5 L955.3,636.8 L956.5,639.1 L957.6,641.5 L958.7,643.9 L959.8,646.4 L960.8,649.0 L961.8,651.6 L962.8,654.3Z M1136.5,657.0 L1135.7,659.8 L1134.9,662.7 L1134.2,665.6 L1133.5,668.7 L1133.0,671.8 L1132.6,674.9 L1132.3,678.1 L1132.2,681.4 L1132.2,684.7 L1132.4,688.0 L1132.9,691.3 L1133.5,694.6 L1134.3,697.8 L1135.3,701.0 L1136.6,704.2 L1138.1,707.2 L1139.8,710.1 L1141.7,712.9 L1143.9,715.5 L1146.2,718.0 L1148.7,720.2 L1151.4,722.3 L1154.3,724.1 L1157.2,725.8 L1160.3,727.2 L1163.5,728.3 L1166.7,729.3 L1170.0,730.0 L1173.3,730.5 L1176.6,730.9 L1179.9,731.0 L1183.2,731.0 L1186.4,730.9 L1189.5,730.6 L1192.7,730.1 L1195.7,729.6 L1198.7,729.0 L1201.6,728.3 L1204.4,727.5 L1207.2,726.7 L1209.9,725.8 L1212.5,724.9 L1215.1,723.9 L1217.6,722.9 L1220.1,721.9 L1222.5,720.8 L1224.9,719.7 L1227.2,718.6 L1229.5,717.4 L1231.7,716.2 L1233.9,714.9 L1236.0,713.6 L1238.1,712.2 L1240.2,710.8 L1242.2,709.4 L1244.2,707.9 L1246.1,706.4 L1248.0,704.8 L1249.9,703.2 L1251.7,701.5 L1253.5,699.8 L1255.2,698.0 L1256.9,696.2 L1258.6,694.4 L1260.3,692.5 L1262.0,690.6 L1263.6,688.6 L1265.2,686.5 L1266.8,684.5 L1268.3,682.3 L1269.8,680.1 L1271.3,677.8 L1272.7,675.5 L1274.1,673.1 L1275.4,670.6 L1276.6,668.0 L1277.8,665.4 L1278.9,662.6 L1279.8,659.9 L1280.6,657.0 L1281.3,654.1 L1281.9,651.1 L1282.3,648.1 L1282.6,645.1 L1282.7,642.0 L1282.6,638.9 L1282.4,635.8 L1282.0,632.7 L1281.4,629.6 L1280.6,626.6 L1279.7,623.6 L1278.6,620.6 L1277.4,617.7 L1276.0,614.9 L1274.4,612.1 L1272.7,609.4 L1270.9,606.8 L1268.9,604.3 L1266.8,601.9 L1264.6,599.6 L1262.3,597.4 L1259.8,595.4 L1257.3,593.4 L1254.7,591.6 L1252.0,589.9 L1249.3,588.4 L1246.4,587.0 L1243.5,585.7 L1240.6,584.6 L1237.6,583.7 L1234.5,582.9 L1231.5,582.3 L1228.4,581.8 L1225.3,581.5 L1222.2,581.4 L1219.2,581.4 L1216.1,581.6 L1213.1,581.9 L1210.1,582.4 L1207.2,583.0 L1204.3,583.8 L1201.5,584.7 L1198.8,585.7 L1196.1,586.8 L1193.5,587.9 L1190.9,589.2 L1188.5,590.5 L1186.1,591.9 L1183.7,593.4 L1181.5,594.9 L1179.3,596.5 L1177.2,598.1 L1175.1,599.7 L1173.1,601.3 L1171.1,603.0 L1169.2,604.7 L1167.4,606.5 L1165.6,608.3 L1163.8,610.1 L1162.1,611.9 L1160.4,613.8 L1158.8,615.7 L1157.2,617.6 L1155.7,619.6 L1154.2,621.6 L1152.7,623.6 L1151.3,625.7 L1150.0,627.8 L1148.7,630.0 L1147.4,632.2 L1146.1,634.5 L1144.9,636.8 L1143.7,639.1 L1142.6,641.5 L1141.5,643.9 L1140.4,646.4 L1139.4,649.0 L1138.4,651.6 L1137.4,654.3Z M963.7,969.8 L964.5,967.0 L965.3,964.1 L966.0,961.2 L966.7,958.1 L967.2,955.0 L967.6,951.9 L967.9,948.7 L968.0,945.4 L968.0,942.1 L967.8,938.8 L967.3,935.5 L966.7,932.2 L965.9,929.0 L964.9,925.8 L963.6,922.6 L962.1,919.6 L960.4,916.7 L958.5,913.9 L956.3,911.3 L954.0,908.8 L951.5,906.6 L948.8,904.5 L945.9,902.7 L943.0,901.0 L939.9,899.6 L936.7,898.5 L933.5,897.5 L930.2,896.8 L926.9,896.3 L923.6,895.9 L920.3,895.8 L917.0,895.8 L913.8,895.9 L910.7,896.2 L907.5,896.7 L904.5,897.2 L901.5,897.8 L898.6,898.5 L895.8,899.3 L893.0,900.1 L890.3,901.0 L887.7,901.9 L885.1,902.9 L882.6,903.9 L880.1,904.9 L877.7,906.0 L875.3,907.1 L873.0,908.2 L870.7,909.4 L868.5,910.6 L866.3,911.9 L864.2,913.2 L862.1,914.6 L860.0,916.0 L858.0,917.4 L856.0,918.9 L854.1,920.4 L852.2,922.0 L850.3,923.6 L848.5,925.3 L846.7,927.0 L845.0,928.8 L843.3,930.6 L841.6,932.4 L839.9,934.3 L838.2,936.2 L836.6,938.2 L835.0,940.3 L833.4,942.3 L831.9,944.5 L830.4,946.7 L828.9,949.0 L827.5,951.3 L826.1,953.7 L824.8,956.2 L823.6,958.8 L822.4,961.4 L821.3,964.2 L820.4,966.9 L819.6,969.8 L818.9,972.7 L818.3,975.7 L817.9,978.7 L817.6,981.7 L817.5,984.8 L817.6,987.9 L817.8,991.0 L818.2,994.1 L818.8,997.2 L819.6,1000.2 L820.5,1003.2 L821.6,1006.2 L822.8,1009.1 L824.2,1011.9 L825.8,1014.7 L827.5,1017.4 L829.3,1020.0 L831.3,1022.5 L833.4,1024.9 L835.6,1027.2 L837.9,1029.4 L840.4,1031.4 L842.9,1033.4 L845.5,1035.2 L848.2,1036.9 L850.9,1038.4 L853.8,1039.8 L856.7,1041.1 L859.6,1042.2 L862.6,1043.1 L865.7,1043.9 L868.7,1044.5 L871.8,1045.0 L874.9,1045.3 L878.0,1045.4 L881.0,1045.4 L884.1,1045.2 L887.1,1044.9 L890.1,1044.4 L893.0,1043.8 L895.9,1043.0 L898.7,1042.1 L901.4,1041.1 L904.1,1040.0 L906.7,1038.9 L909.3,1037.6 L911.7,1036.3 L914.1,1034.9 L916.5,1033.4 L918.7,1031.9 L920.9,1030.3 L923.0,1028.7 L925.1,1027.1 L927.1,1025.5 L929.1,1023.8 L931.0,1022.1 L932.8,1020.3 L934.6,1018.5 L936.4,1016.7 L938.1,1014.9 L939.8,1013.0 L941.4,1011.1 L943.0,1009.2 L944.5,1007.2 L946.0,1005.2 L947.5,1003.2 L948.9,1001.1 L950.2,999.0 L951.5,996.8 L952.8,994.6 L954.1,992.3 L955.3,990.0 L956.5,987.7 L957.6,985.3 L958.7,982.9 L959.8,980.4 L960.8,977.8 L961.8,975.2 L962.8,972.5Z M1136.5,969.8 L1135.7,967.0 L1134.9,964.1 L1134.2,961.2 L1133.5,958.1 L1133.0,955.0 L1132.6,951.9 L1132.3,948.7 L1132.2,945.4 L1132.2,942.1 L1132.4,938.8 L1132.9,935.5 L1133.5,932.2 L1134.3,929.0 L1135.3,925.8 L1136.6,922.6 L1138.1,919.6 L1139.8,916.7 L1141.7,913.9 L1143.9,911.3 L1146.2,908.8 L1148.7,906.6 L1151.4,904.5 L1154.3,902.7 L1157.2,901.0 L1160.3,899.6 L1163.5,898.5 L1166.7,897.5 L1170.0,896.8 L1173.3,896.3 L1176.6,895.9 L1179.9,895.8 L1183.2,895.8 L1186.4,895.9 L1189.5,896.2 L1192.7,896.7 L1195.7,897.2 L1198.7,897.8 L1201.6,898.5 L1204.4,899.3 L1207.2,900.1 L1209.9,901.0 L1212.5,901.9 L1215.1,902.9 L1217.6,903.9 L1220.1,904.9 L1222.5,906.0 L1224.9,907.1 L1227.2,908.2 L1229.5,909.4 L1231.7,910.6 L1233.9,911.9 L1236.0,913.2 L1238.1,914.6 L1240.2,916.0 L1242.2,917.4 L1244.2,918.9 L1246.1,920.4 L1248.0,922.0 L1249.9,923.6 L1251.7,925.3 L1253.5,927.0 L1255.2,928.8 L1256.9,930.6 L1258.6,932.4 L1260.3,934.3 L1262.0,936.2 L1263.6,938.2 L1265.2,940.3 L1266.8,942.3 L1268.3,944.5 L1269.8,946.7 L1271.3,949.0 L1272.7,951.3 L1274.1,953.7 L1275.4,956.2 L1276.6,958.8 L1277.8,961.4 L1278.9,964.2 L1279.8,966.9 L1280.6,969.8 L1281.3,972.7 L1281.9,975.7 L1282.3,978.7 L1282.6,981.7 L1282.7,984.8 L1282.6,987.9 L1282.4,991.0 L1282.0,994.1 L1281.4,997.2 L1280.6,1000.2 L1279.7,1003.2 L1278.6,1006.2 L1277.4,1009.1 L1276.0,1011.9 L1274.4,1014.7 L1272.7,1017.4 L1270.9,1020.0 L1268.9,1022.5 L1266.8,1024.9 L1264.6,1027.2 L1262.3,1029.4 L1259.8,1031.4 L1257.3,1033.4 L1254.7,1035.2 L1252.0,1036.9 L1249.3,1038.4 L1246.4,1039.8 L1243.5,1041.1 L1240.6,1042.2 L1237.6,1043.1 L1234.5,1043.9 L1231.5,1044.5 L1228.4,1045.0 L1225.3,1045.3 L1222.2,1045.4 L1219.2,1045.4 L1216.1,1045.2 L1213.1,1044.9 L1210.1,1044.4 L1207.2,1043.8 L1204.3,1043.0 L1201.5,1042.1 L1198.8,1041.1 L1196.1,1040.0 L1193.5,1038.9 L1190.9,1037.6 L1188.5,1036.3 L1186.1,1034.9 L1183.7,1033.4 L1181.5,1031.9 L1179.3,1030.3 L1177.2,1028.7 L1175.1,1027.1 L1173.1,1025.5 L1171.1,1023.8 L1169.2,1022.1 L1167.4,1020.3 L1165.6,1018.5 L1163.8,1016.7 L1162.1,1014.9 L1160.4,1013.0 L1158.8,1011.1 L1157.2,1009.2 L1155.7,1007.2 L1154.2,1005.2 L1152.7,1003.2 L1151.3,1001.1 L1150.0,999.0 L1148.7,996.8 L1147.4,994.6 L1146.1,992.3 L1144.9,990.0 L1143.7,987.7 L1142.6,985.3 L1141.5,982.9 L1140.4,980.4 L1139.4,977.8 L1138.4,975.2 L1137.4,972.5Z"/></clipPath>
<rect x="753.3" y="599.0" width="593.6" height="428.7" fill="none" stroke="#d49a50" stroke-width="1"/>
<path d="M819.2,665.0 H1281.0 V961.8 H819.2 Z" fill="none" stroke="#ea1010" stroke-width="6.2" stroke-linejoin="round"/>
<path d="M963.7,657.0 L964.5,659.8 L965.3,662.7 L966.0,665.6 L966.7,668.7 L967.2,671.8 L967.6,674.9 L967.9,678.1 L968.0,681.4 L968.0,684.7 L967.8,688.0 L967.3,691.3 L966.7,694.6 L965.9,697.8 L964.9,701.0 L963.6,704.2 L962.1,707.2 L960.4,710.1 L958.5,712.9 L956.3,715.5 L954.0,718.0 L951.5,720.2 L948.8,722.3 L945.9,724.1 L943.0,725.8 L939.9,727.2 L936.7,728.3 L933.5,729.3 L930.2,730.0 L926.9,730.5 L923.6,730.9 L920.3,731.0 L917.0,731.0 L913.8,730.9 L910.7,730.6 L907.5,730.1 L904.5,729.6 L901.5,729.0 L898.6,728.3 L895.8,727.5 L893.0,726.7 L890.3,725.8 L887.7,724.9 L885.1,723.9 L882.6,722.9 L880.1,721.9 L877.7,720.8 L875.3,719.7 L873.0,718.6 L870.7,717.4 L868.5,716.2 L866.3,714.9 L864.2,713.6 L862.1,712.2 L860.0,710.8 L858.0,709.4 L856.0,707.9 L854.1,706.4 L852.2,704.8 L850.3,703.2 L848.5,701.5 L846.7,699.8 L845.0,698.0 L843.3,696.2 L841.6,694.4 L839.9,692.5 L838.2,690.6 L836.6,688.6 L835.0,686.5 L833.4,684.5 L831.9,682.3 L830.4,680.1 L828.9,677.8 L827.5,675.5 L826.1,673.1 L824.8,670.6 L823.6,668.0 L822.4,665.4 L821.3,662.6 L820.4,659.9 L819.6,657.0 L818.9,654.1 L818.3,651.1 L817.9,648.1 L817.6,645.1 L817.5,642.0 L817.6,638.9 L817.8,635.8 L818.2,632.7 L818.8,629.6 L819.6,626.6 L820.5,623.6 L821.6,620.6 L822.8,617.7 L824.2,614.9 L825.8,612.1 L827.5,609.4 L829.3,606.8 L831.3,604.3 L833.4,601.9 L835.6,599.6 L837.9,597.4 L840.4,595.4 L842.9,593.4 L845.5,591.6 L848.2,589.9 L850.9,588.4 L853.8,587.0 L856.7,585.7 L859.6,584.6 L862.6,583.7 L865.7,582.9 L868.7,582.3 L871.8,581.8 L874.9,581.5 L878.0,581.4 L881.0,581.4 L884.1,581.6 L887.1,581.9 L890.1,582.4 L893.0,583.0 L895.9,583.8 L898.7,584.7 L901.4,585.7 L904.1,586.8 L906.7,587.9 L909.3,589.2 L911.7,590.5 L914.1,591.9 L916.5,593.4 L918.7,594.9 L920.9,596.5 L923.0,598.1 L925.1,599.7 L927.1,601.3 L929.1,603.0 L931.0,604.7 L932.8,606.5 L934.6,608.3 L936.4,610.1 L938.1,611.9 L939.8,613.8 L941.4,615.7 L943.0,617.6 L944.5,619.6 L946.0,621.6 L947.5,623.6 L948.9,625.7 L950.2,627.8 L951.5,630.0 L952.8,632.2 L954.1,634.5 L955.3,636.8 L956.5,639.1 L957.6,641.5 L958.7,643.9 L959.8,646.4 L960.8,649.0 L961.8,651.6 L962.8,654.3Z" fill="#c2eac8"/>
<path d="M1136.5,657.0 L1135.7,659.8 L1134.9,662.7 L1134.2,665.6 L1133.5,668.7 L1133.0,671.8 L1132.6,674.9 L1132.3,678.1 L1132.2,681.4 L1132.2,684.7 L1132.4,688.0 L1132.9,691.3 L1133.5,694.6 L1134.3,697.8 L1135.3,701.0 L1136.6,704.2 L1138.1,707.2 L1139.8,710.1 L1141.7,712.9 L1143.9,715.5 L1146.2,718.0 L1148.7,720.2 L1151.4,722.3 L1154.3,724.1 L1157.2,725.8 L1160.3,727.2 L1163.5,728.3 L1166.7,729.3 L1170.0,730.0 L1173.3,730.5 L1176.6,730.9 L1179.9,731.0 L1183.2,731.0 L1186.4,730.9 L1189.5,730.6 L1192.7,730.1 L1195.7,729.6 L1198.7,729.0 L1201.6,728.3 L1204.4,727.5 L1207.2,726.7 L1209.9,725.8 L1212.5,724.9 L1215.1,723.9 L1217.6,722.9 L1220.1,721.9 L1222.5,720.8 L1224.9,719.7 L1227.2,718.6 L1229.5,717.4 L1231.7,716.2 L1233.9,714.9 L1236.0,713.6 L1238.1,712.2 L1240.2,710.8 L1242.2,709.4 L1244.2,707.9 L1246.1,706.4 L1248.0,704.8 L1249.9,703.2 L1251.7,701.5 L1253.5,699.8 L1255.2,698.0 L1256.9,696.2 L1258.6,694.4 L1260.3,692.5 L1262.0,690.6 L1263.6,688.6 L1265.2,686.5 L1266.8,684.5 L1268.3,682.3 L1269.8,680.1 L1271.3,677.8 L1272.7,675.5 L1274.1,673.1 L1275.4,670.6 L1276.6,668.0 L1277.8,665.4 L1278.9,662.6 L1279.8,659.9 L1280.6,657.0 L1281.3,654.1 L1281.9,651.1 L1282.3,648.1 L1282.6,645.1 L1282.7,642.0 L1282.6,638.9 L1282.4,635.8 L1282.0,632.7 L1281.4,629.6 L1280.6,626.6 L1279.7,623.6 L1278.6,620.6 L1277.4,617.7 L1276.0,614.9 L1274.4,612.1 L1272.7,609.4 L1270.9,606.8 L1268.9,604.3 L1266.8,601.9 L1264.6,599.6 L1262.3,597.4 L1259.8,595.4 L1257.3,593.4 L1254.7,591.6 L1252.0,589.9 L1249.3,588.4 L1246.4,587.0 L1243.5,585.7 L1240.6,584.6 L1237.6,583.7 L1234.5,582.9 L1231.5,582.3 L1228.4,581.8 L1225.3,581.5 L1222.2,581.4 L1219.2,581.4 L1216.1,581.6 L1213.1,581.9 L1210.1,582.4 L1207.2,583.0 L1204.3,583.8 L1201.5,584.7 L1198.8,585.7 L1196.1,586.8 L1193.5,587.9 L1190.9,589.2 L1188.5,590.5 L1186.1,591.9 L1183.7,593.4 L1181.5,594.9 L1179.3,596.5 L1177.2,598.1 L1175.1,599.7 L1173.1,601.3 L1171.1,603.0 L1169.2,604.7 L1167.4,606.5 L1165.6,608.3 L1163.8,610.1 L1162.1,611.9 L1160.4,613.8 L1158.8,615.7 L1157.2,617.6 L1155.7,619.6 L1154.2,621.6 L1152.7,623.6 L1151.3,625.7 L1150.0,627.8 L1148.7,630.0 L1147.4,632.2 L1146.1,634.5 L1144.9,636.8 L1143.7,639.1 L1142.6,641.5 L1141.5,643.9 L1140.4,646.4 L1139.4,649.0 L1138.4,651.6 L1137.4,654.3Z" fill="#c2eac8"/>
<path d="M963.7,969.8 L964.5,967.0 L965.3,964.1 L966.0,961.2 L966.7,958.1 L967.2,955.0 L967.6,951.9 L967.9,948.7 L968.0,945.4 L968.0,942.1 L967.8,938.8 L967.3,935.5 L966.7,932.2 L965.9,929.0 L964.9,925.8 L963.6,922.6 L962.1,919.6 L960.4,916.7 L958.5,913.9 L956.3,911.3 L954.0,908.8 L951.5,906.6 L948.8,904.5 L945.9,902.7 L943.0,901.0 L939.9,899.6 L936.7,898.5 L933.5,897.5 L930.2,896.8 L926.9,896.3 L923.6,895.9 L920.3,895.8 L917.0,895.8 L913.8,895.9 L910.7,896.2 L907.5,896.7 L904.5,897.2 L901.5,897.8 L898.6,898.5 L895.8,899.3 L893.0,900.1 L890.3,901.0 L887.7,901.9 L885.1,902.9 L882.6,903.9 L880.1,904.9 L877.7,906.0 L875.3,907.1 L873.0,908.2 L870.7,909.4 L868.5,910.6 L866.3,911.9 L864.2,913.2 L862.1,914.6 L860.0,916.0 L858.0,917.4 L856.0,918.9 L854.1,920.4 L852.2,922.0 L850.3,923.6 L848.5,925.3 L846.7,927.0 L845.0,928.8 L843.3,930.6 L841.6,932.4 L839.9,934.3 L838.2,936.2 L836.6,938.2 L835.0,940.3 L833.4,942.3 L831.9,944.5 L830.4,946.7 L828.9,949.0 L827.5,951.3 L826.1,953.7 L824.8,956.2 L823.6,958.8 L822.4,961.4 L821.3,964.2 L820.4,966.9 L819.6,969.8 L818.9,972.7 L818.3,975.7 L817.9,978.7 L817.6,981.7 L817.5,984.8 L817.6,987.9 L817.8,991.0 L818.2,994.1 L818.8,997.2 L819.6,1000.2 L820.5,1003.2 L821.6,1006.2 L822.8,1009.1 L824.2,1011.9 L825.8,1014.7 L827.5,1017.4 L829.3,1020.0 L831.3,1022.5 L833.4,1024.9 L835.6,1027.2 L837.9,1029.4 L840.4,1031.4 L842.9,1033.4 L845.5,1035.2 L848.2,1036.9 L850.9,1038.4 L853.8,1039.8 L856.7,1041.1 L859.6,1042.2 L862.6,1043.1 L865.7,1043.9 L868.7,1044.5 L871.8,1045.0 L874.9,1045.3 L878.0,1045.4 L881.0,1045.4 L884.1,1045.2 L887.1,1044.9 L890.1,1044.4 L893.0,1043.8 L895.9,1043.0 L898.7,1042.1 L901.4,1041.1 L904.1,1040.0 L906.7,1038.9 L909.3,1037.6 L911.7,1036.3 L914.1,1034.9 L916.5,1033.4 L918.7,1031.9 L920.9,1030.3 L923.0,1028.7 L925.1,1027.1 L927.1,1025.5 L929.1,1023.8 L931.0,1022.1 L932.8,1020.3 L934.6,1018.5 L936.4,1016.7 L938.1,1014.9 L939.8,1013.0 L941.4,1011.1 L943.0,1009.2 L944.5,1007.2 L946.0,1005.2 L947.5,1003.2 L948.9,1001.1 L950.2,999.0 L951.5,996.8 L952.8,994.6 L954.1,992.3 L955.3,990.0 L956.5,987.7 L957.6,985.3 L958.7,982.9 L959.8,980.4 L960.8,977.8 L961.8,975.2 L962.8,972.5Z" fill="#c2eac8"/>
<path d="M1136.5,969.8 L1135.7,967.0 L1134.9,964.1 L1134.2,961.2 L1133.5,958.1 L1133.0,955.0 L1132.6,951.9 L1132.3,948.7 L1132.2,945.4 L1132.2,942.1 L1132.4,938.8 L1132.9,935.5 L1133.5,932.2 L1134.3,929.0 L1135.3,925.8 L1136.6,922.6 L1138.1,919.6 L1139.8,916.7 L1141.7,913.9 L1143.9,911.3 L1146.2,908.8 L1148.7,906.6 L1151.4,904.5 L1154.3,902.7 L1157.2,901.0 L1160.3,899.6 L1163.5,898.5 L1166.7,897.5 L1170.0,896.8 L1173.3,896.3 L1176.6,895.9 L1179.9,895.8 L1183.2,895.8 L1186.4,895.9 L1189.5,896.2 L1192.7,896.7 L1195.7,897.2 L1198.7,897.8 L1201.6,898.5 L1204.4,899.3 L1207.2,900.1 L1209.9,901.0 L1212.5,901.9 L1215.1,902.9 L1217.6,903.9 L1220.1,904.9 L1222.5,906.0 L1224.9,907.1 L1227.2,908.2 L1229.5,909.4 L1231.7,910.6 L1233.9,911.9 L1236.0,913.2 L1238.1,914.6 L1240.2,916.0 L1242.2,917.4 L1244.2,918.9 L1246.1,920.4 L1248.0,922.0 L1249.9,923.6 L1251.7,925.3 L1253.5,927.0 L1255.2,928.8 L1256.9,930.6 L1258.6,932.4 L1260.3,934.3 L1262.0,936.2 L1263.6,938.2 L1265.2,940.3 L1266.8,942.3 L1268.3,944.5 L1269.8,946.7 L1271.3,949.0 L1272.7,951.3 L1274.1,953.7 L1275.4,956.2 L1276.6,958.8 L1277.8,961.4 L1278.9,964.2 L1279.8,966.9 L1280.6,969.8 L1281.3,972.7 L1281.9,975.7 L1282.3,978.7 L1282.6,981.7 L1282.7,984.8 L1282.6,987.9 L1282.4,991.0 L1282.0,994.1 L1281.4,997.2 L1280.6,1000.2 L1279.7,1003.2 L1278.6,1006.2 L1277.4,1009.1 L1276.0,1011.9 L1274.4,1014.7 L1272.7,1017.4 L1270.9,1020.0 L1268.9,1022.5 L1266.8,1024.9 L1264.6,1027.2 L1262.3,1029.4 L1259.8,1031.4 L1257.3,1033.4 L1254.7,1035.2 L1252.0,1036.9 L1249.3,1038.4 L1246.4,1039.8 L1243.5,1041.1 L1240.6,1042.2 L1237.6,1043.1 L1234.5,1043.9 L1231.5,1044.5 L1228.4,1045.0 L1225.3,1045.3 L1222.2,1045.4 L1219.2,1045.4 L1216.1,1045.2 L1213.1,1044.9 L1210.1,1044.4 L1207.2,1043.8 L1204.3,1043.0 L1201.5,1042.1 L1198.8,1041.1 L1196.1,1040.0 L1193.5,1038.9 L1190.9,1037.6 L1188.5,1036.3 L1186.1,1034.9 L1183.7,1033.4 L1181.5,1031.9 L1179.3,1030.3 L1177.2,1028.7 L1175.1,1027.1 L1173.1,1025.5 L1171.1,1023.8 L1169.2,1022.1 L1167.4,1020.3 L1165.6,1018.5 L1163.8,1016.7 L1162.1,1014.9 L1160.4,1013.0 L1158.8,1011.1 L1157.2,1009.2 L1155.7,1007.2 L1154.2,1005.2 L1152.7,1003.2 L1151.3,1001.1 L1150.0,999.0 L1148.7,996.8 L1147.4,994.6 L1146.1,992.3 L1144.9,990.0 L1143.7,987.7 L1142.6,985.3 L1141.5,982.9 L1140.4,980.4 L1139.4,977.8 L1138.4,975.2 L1137.4,972.5Z" fill="#c2eac8"/>
<circle cx="875.2" cy="638.2" r="38.4" fill="#a9d3ae"/>
<circle cx="871.7" cy="634.7" r="23.4" fill="#97c29c"/>
<circle cx="870.2" cy="633.2" r="14.5" fill="#80ad88"/>
<circle cx="1225" cy="638.2" r="38.4" fill="#a9d3ae"/>
<circle cx="1228.5" cy="634.7" r="23.4" fill="#97c29c"/>
<circle cx="1230" cy="633.2" r="14.5" fill="#80ad88"/>
<circle cx="875.2" cy="988.6" r="38.4" fill="#a9d3ae"/>
<circle cx="871.7" cy="992.1" r="23.4" fill="#97c29c"/>
<circle cx="870.2" cy="993.6" r="14.5" fill="#80ad88"/>
<circle cx="1225" cy="988.6" r="38.4" fill="#a9d3ae"/>
<circle cx="1228.5" cy="992.1" r="23.4" fill="#97c29c"/>
<circle cx="1230" cy="993.6" r="14.5" fill="#80ad88"/>
<path d="M819.2,665.0 H1281.0 M819.2,961.8 H1281.0" stroke="#0c1c10" stroke-width="2.8" clip-path="url(#eggs)"/>
<g stroke="#3a66b0" stroke-width="1.1" fill="none"><circle cx="869.2" cy="632.2" r="10.1"/><path d="M857.2,632.2 H881.2 M869.2,619.7 V644.7"/></g>
<g stroke="#3a66b0" stroke-width="1.1" fill="none"><circle cx="1231" cy="632.2" r="10.1"/><path d="M1219,632.2 H1243 M1231,619.7 V644.7"/></g>
<g stroke="#3a66b0" stroke-width="1.1" fill="none"><circle cx="869.2" cy="994.6" r="10.1"/><path d="M857.2,994.6 H881.2 M869.2,982.1 V1007.1"/></g>
<g stroke="#3a66b0" stroke-width="1.1" fill="none"><circle cx="1231" cy="994.6" r="10.1"/><path d="M1219,994.6 H1243 M1231,982.1 V1007.1"/></g>
<path d="M1037.5,800.7 L1063.2,826 M1063.2,800.7 L1037.5,826" stroke="#d4406c" stroke-width="4" stroke-linecap="round"/>
<g font-family="Liberation Sans" font-size="24" fill="#0a0a0a">
<text x="877.3" y="668.2">3</text>
<text x="1239.5" y="668.2">4</text>
<text x="877.3" y="1031.6">1</text>
<text x="1239.5" y="1031.6">2</text>
<text x="1058.5" y="849.6">5</text>
</g>
<path d="M146,231.4 H1954" stroke="#3a489e" stroke-width="1.2"/>
<path d="M734.6,198 V1429" stroke="#3c3c80" stroke-width="1.2"/>
</g>
<g stroke="#000">
<path d="M159.6,188 V198" stroke-width="1.4"/>
<path d="M176.1,188 V198" stroke-width="1.4"/>
<path d="M192.6,178 V198" stroke-width="2.2"/>
<path d="M209.1,188 V198" stroke-width="1.4"/>
<path d="M225.6,188 V198" stroke-width="1.4"/>
<path d="M242.1,188 V198" stroke-width="1.4"/>
<path d="M258.6,178 V198" stroke-width="2.2"/>
<path d="M275.1,188 V198" stroke-width="1.4"/>
<path d="M291.6,188 V198" stroke-width="1.4"/>
<path d="M308.0,188 V198" stroke-width="1.4"/>
<path d="M324.5,178 V198" stroke-width="2.2"/>
<path d="M341.0,188 V198" stroke-width="1.4"/>
<path d="M357.5,188 V198" stroke-width="1.4"/>
<path d="M374.0,188 V198" stroke-width="1.4"/>
<path d="M390.5,178 V198" stroke-width="2.2"/>
<path d="M407.0,188 V198" stroke-width="1.4"/>
<path d="M423.5,188 V198" stroke-width="1.4"/>
<path d="M440.0,188 V198" stroke-width="1.4"/>
<path d="M456.5,178 V198" stroke-width="2.2"/>
<path d="M472.9,188 V198" stroke-width="1.4"/>
<path d="M489.4,188 V198" stroke-width="1.4"/>
<path d="M505.9,188 V198" stroke-width="1.4"/>
<path d="M522.4,178 V198" stroke-width="2.2"/>
<path d="M538.9,188 V198" stroke-width="1.4"/>
<path d="M555.4,188 V198" stroke-width="1.4"/>
<path d="M571.9,188 V198" stroke-width="1.4"/>
<path d="M588.4,178 V198" stroke-width="2.2"/>
<path d="M604.9,188 V198" stroke-width="1.4"/>
<path d="M621.4,188 V198" stroke-width="1.4"/>
<path d="M637.8,188 V198" stroke-width="1.4"/>
<path d="M654.3,178 V198" stroke-width="2.2"/>
<path d="M670.8,188 V198" stroke-width="1.4"/>
<path d="M687.3,188 V198" stroke-width="1.4"/>
<path d="M703.8,188 V198" stroke-width="1.4"/>
<path d="M720.3,178 V198" stroke-width="2.2"/>
<path d="M736.8,188 V198" stroke-width="1.4"/>
<path d="M753.3,188 V198" stroke-width="1.4"/>
<path d="M769.8,188 V198" stroke-width="1.4"/>
<path d="M786.3,178 V198" stroke-width="2.2"/>
<path d="M802.8,188 V198" stroke-width="1.4"/>
<path d="M819.2,188 V198" stroke-width="1.4"/>
<path d="M835.7,188 V198" stroke-width="1.4"/>
<path d="M852.2,178 V198" stroke-width="2.2"/>
<path d="M868.7,188 V198" stroke-width="1.4"/>
<path d="M885.2,188 V198" stroke-width="1.4"/>
<path d="M901.7,188 V198" stroke-width="1.4"/>
<path d="M918.2,178 V198" stroke-width="2.2"/>
<path d="M934.7,188 V198" stroke-width="1.4"/>
<path d="M951.2,188 V198" stroke-width="1.4"/>
<path d="M967.6,188 V198" stroke-width="1.4"/>
<path d="M984.1,178 V198" stroke-width="2.2"/>
<path d="M1000.6,188 V198" stroke-width="1.4"/>
<path d="M1017.1,188 V198" stroke-width="1.4"/>
<path d="M1033.6,188 V198" stroke-width="1.4"/>
<path d="M1050.1,178 V198" stroke-width="2.2"/>
<path d="M1066.6,188 V198" stroke-width="1.4"/>
<path d="M1083.1,188 V198" stroke-width="1.4"/>
<path d="M1099.6,188 V198" stroke-width="1.4"/>
<path d="M1116.1,178 V198" stroke-width="2.2"/>
<path d="M1132.5,188 V198" stroke-width="1.4"/>
<path d="M1149.0,188 V198" stroke-width="1.4"/>
<path d="M1165.5,188 V198" stroke-width="1.4"/>
<path d="M1182.0,178 V198" stroke-width="2.2"/>
<path d="M1198.5,188 V198" stroke-width="1.4"/>
<path d="M1215.0,188 V198" stroke-width="1.4"/>
<path d="M1231.5,188 V198" stroke-width="1.4"/>
<path d="M1248.0,178 V198" stroke-width="2.2"/>
<path d="M1264.5,188 V198" stroke-width="1.4"/>
<path d="M1281.0,188 V198" stroke-width="1.4"/>
<path d="M1297.4,188 V198" stroke-width="1.4"/>
<path d="M1313.9,178 V198" stroke-width="2.2"/>
<path d="M1330.4,188 V198" stroke-width="1.4"/>
<path d="M1346.9,188 V198" stroke-width="1.4"/>
<path d="M1363.4,188 V198" stroke-width="1.4"/>
<path d="M1379.9,178 V198" stroke-width="2.2"/>
<path d="M1396.4,188 V198" stroke-width="1.4"/>
<path d="M1412.9,188 V198" stroke-width="1.4"/>
<path d="M1429.4,188 V198" stroke-width="1.4"/>
<path d="M1445.9,178 V198" stroke-width="2.2"/>
<path d="M1462.3,188 V198" stroke-width="1.4"/>
<path d="M1478.8,188 V198" stroke-width="1.4"/>
<path d="M1495.3,188 V198" stroke-width="1.4"/>
<path d="M1511.8,178 V198" stroke-width="2.2"/>
<path d="M1528.3,188 V198" stroke-width="1.4"/>
<path d="M1544.8,188 V198" stroke-width="1.4"/>
<path d="M1561.3,188 V198" stroke-width="1.4"/>
<path d="M1577.8,178 V198" stroke-width="2.2"/>
<path d="M1594.3,188 V198" stroke-width="1.4"/>
<path d="M1610.8,188 V198" stroke-width="1.4"/>
<path d="M1627.2,188 V198" stroke-width="1.4"/>
<path d="M1643.7,178 V198" stroke-width="2.2"/>
<path d="M1660.2,188 V198" stroke-width="1.4"/>
<path d="M1676.7,188 V198" stroke-width="1.4"/>
<path d="M1693.2,188 V198" stroke-width="1.4"/>
<path d="M1709.7,178 V198" stroke-width="2.2"/>
<path d="M1726.2,188 V198" stroke-width="1.4"/>
<path d="M1742.7,188 V198" stroke-width="1.4"/>
<path d="M1759.2,188 V198" stroke-width="1.4"/>
<path d="M1775.7,178 V198" stroke-width="2.2"/>
<path d="M1792.1,188 V198" stroke-width="1.4"/>
<path d="M1808.6,188 V198" stroke-width="1.4"/>
<path d="M1825.1,188 V198" stroke-width="1.4"/>
<path d="M1841.6,178 V198" stroke-width="2.2"/>
<path d="M1858.1,188 V198" stroke-width="1.4"/>
<path d="M1874.6,188 V198" stroke-width="1.4"/>
<path d="M1891.1,188 V198" stroke-width="1.4"/>
<path d="M1907.6,178 V198" stroke-width="2.2"/>
<path d="M1924.1,188 V198" stroke-width="1.4"/>
<path d="M1940.6,188 V198" stroke-width="1.4"/>
<path d="M136,1423.5 H146" stroke-width="1.4"/>
<path d="M129.8,1407.0 H146" stroke-width="2.2"/>
<path d="M136,1390.5 H146" stroke-width="1.4"/>
<path d="M136,1374.1 H146" stroke-width="1.4"/>
<path d="M136,1357.6 H146" stroke-width="1.4"/>
<path d="M129.8,1341.1 H146" stroke-width="2.2"/>
<path d="M136,1324.6 H146" stroke-width="1.4"/>
<path d="M136,1308.1 H146" stroke-width="1.4"/>
<path d="M136,1291.6 H146" stroke-width="1.4"/>
<path d="M129.8,1275.1 H146" stroke-width="2.2"/>
<path d="M136,1258.6 H146" stroke-width="1.4"/>
<path d="M136,1242.1 H146" stroke-width="1.4"/>
<path d="M136,1225.6 H146" stroke-width="1.4"/>
<path d="M129.8,1209.2 H146" stroke-width="2.2"/>
<path d="M136,1192.7 H146" stroke-width="1.4"/>
<path d="M136,1176.2 H146" stroke-width="1.4"/>
<path d="M136,1159.7 H146" stroke-width="1.4"/>
<path d="M129.8,1143.2 H146" stroke-width="2.2"/>
<path d="M136,1126.7 H146" stroke-width="1.4"/>
<path d="M136,1110.2 H146" stroke-width="1.4"/>
<path d="M136,1093.7 H146" stroke-width="1.4"/>
<path d="M126.0,1077.2 H146" stroke-width="2.2"/>
<path d="M136,1060.8 H146" stroke-width="1.4"/>
<path d="M136,1044.3 H146" stroke-width="1.4"/>
<path d="M136,1027.8 H146" stroke-width="1.4"/>
<path d="M126.0,1011.3 H146" stroke-width="2.2"/>
<path d="M136,994.8 H146" stroke-width="1.4"/>
<path d="M136,978.3 H146" stroke-width="1.4"/>
<path d="M136,961.8 H146" stroke-width="1.4"/>
<path d="M126.0,945.3 H146" stroke-width="2.2"/>
<path d="M136,928.8 H146" stroke-width="1.4"/>
<path d="M136,912.3 H146" stroke-width="1.4"/>
<path d="M136,895.8 H146" stroke-width="1.4"/>
<path d="M126.0,879.4 H146" stroke-width="2.2"/>
<path d="M136,862.9 H146" stroke-width="1.4"/>
<path d="M136,846.4 H146" stroke-width="1.4"/>
<path d="M136,829.9 H146" stroke-width="1.4"/>
<path d="M123.7,813.4 H146" stroke-width="2.2"/>
<path d="M136,796.9 H146" stroke-width="1.4"/>
<path d="M136,780.4 H146" stroke-width="1.4"/>
<path d="M136,763.9 H146" stroke-width="1.4"/>
<path d="M123.7,747.4 H146" stroke-width="2.2"/>
<path d="M136,731.0 H146" stroke-width="1.4"/>
<path d="M136,714.5 H146" stroke-width="1.4"/>
<path d="M136,698.0 H146" stroke-width="1.4"/>
<path d="M123.7,681.5 H146" stroke-width="2.2"/>
<path d="M136,665.0 H146" stroke-width="1.4"/>
<path d="M136,648.5 H146" stroke-width="1.4"/>
<path d="M136,632.0 H146" stroke-width="1.4"/>
<path d="M123.7,615.5 H146" stroke-width="2.2"/>
<path d="M136,599.0 H146" stroke-width="1.4"/>
<path d="M136,582.5 H146" stroke-width="1.4"/>
<path d="M136,566.0 H146" stroke-width="1.4"/>
<path d="M123.7,549.6 H146" stroke-width="2.2"/>
<path d="M136,533.1 H146" stroke-width="1.4"/>
<path d="M136,516.6 H146" stroke-width="1.4"/>
<path d="M136,500.1 H146" stroke-width="1.4"/>
<path d="M127.5,483.6 H146" stroke-width="2.2"/>
<path d="M136,467.1 H146" stroke-width="1.4"/>
<path d="M136,450.6 H146" stroke-width="1.4"/>
<path d="M136,434.1 H146" stroke-width="1.4"/>
<path d="M127.5,417.6 H146" stroke-width="2.2"/>
<path d="M136,401.2 H146" stroke-width="1.4"/>
<path d="M136,384.7 H146" stroke-width="1.4"/>
<path d="M136,368.2 H146" stroke-width="1.4"/>
<path d="M127.5,351.7 H146" stroke-width="2.2"/>
<path d="M136,335.2 H146" stroke-width="1.4"/>
<path d="M136,318.7 H146" stroke-width="1.4"/>
<path d="M136,302.2 H146" stroke-width="1.4"/>
<path d="M127.5,285.7 H146" stroke-width="2.2"/>
<path d="M136,269.2 H146" stroke-width="1.4"/>
<path d="M136,252.7 H146" stroke-width="1.4"/>
<path d="M136,236.2 H146" stroke-width="1.4"/>
<path d="M127.5,219.8 H146" stroke-width="2.2"/>
<path d="M136,203.3 H146" stroke-width="1.4"/>
</g>
<g font-family="Liberation Sans" font-size="13.9" fill="#111">
<text x="192.6" y="174.8" text-anchor="middle">-26</text>
<text x="258.6" y="174.8" text-anchor="middle">-24</text>
<text x="324.5" y="174.8" text-anchor="middle">-22</text>
<text x="390.5" y="174.8" text-anchor="middle">-20</text>
<text x="456.5" y="174.8" text-anchor="middle">-18</text>
<text x="522.4" y="174.8" text-anchor="middle">-16</text>
<text x="588.4" y="174.8" text-anchor="middle">-14</text>
<text x="654.3" y="174.8" text-anchor="middle">-12</text>
<text x="720.3" y="174.8" text-anchor="middle">-10</text>
<text x="786.3" y="174.8" text-anchor="middle">-8</text>
<text x="852.2" y="174.8" text-anchor="middle">-6</text>
<text x="918.2" y="174.8" text-anchor="middle">-4</text>
<text x="984.1" y="174.8" text-anchor="middle">-2</text>
<text x="1050.1" y="174.8" text-anchor="middle">0</text>
<text x="1116.1" y="174.8" text-anchor="middle">2</text>
<text x="1182.0" y="174.8" text-anchor="middle">4</text>
<text x="1248.0" y="174.8" text-anchor="middle">6</text>
<text x="1313.9" y="174.8" text-anchor="middle">8</text>
<text x="1379.9" y="174.8" text-anchor="middle">10</text>
<text x="1445.9" y="174.8" text-anchor="middle">12</text>
<text x="1511.8" y="174.8" text-anchor="middle">14</text>
<text x="1577.8" y="174.8" text-anchor="middle">16</text>
<text x="1643.7" y="174.8" text-anchor="middle">18</text>
<text x="1709.7" y="174.8" text-anchor="middle">20</text>
<text x="1775.7" y="174.8" text-anchor="middle">22</text>
<text x="1841.6" y="174.8" text-anchor="middle">24</text>
<text x="1907.6" y="174.8" text-anchor="middle">26</text>
<text x="118.2" y="1411.9" text-anchor="middle">-18</text>
<text x="118.2" y="1346.0" text-anchor="middle">-16</text>
<text x="118.2" y="1280.0" text-anchor="middle">-14</text>
<text x="118.2" y="1214.1" text-anchor="middle">-12</text>
<text x="118.2" y="1148.1" text-anchor="middle">-10</text>
<text x="118.2" y="1082.1" text-anchor="middle">-8</text>
<text x="118.2" y="1016.2" text-anchor="middle">-6</text>
<text x="118.2" y="950.2" text-anchor="middle">-4</text>
<text x="118.2" y="884.3" text-anchor="middle">-2</text>
<text x="118.2" y="818.3" text-anchor="middle">0</text>
<text x="118.2" y="752.3" text-anchor="middle">2</text>
<text x="118.2" y="686.4" text-anchor="middle">4</text>
<text x="118.2" y="620.4" text-anchor="middle">6</text>
<text x="118.2" y="554.5" text-anchor="middle">8</text>
<text x="118.2" y="488.5" text-anchor="middle">10</text>
<text x="118.2" y="422.5" text-anchor="middle">12</text>
<text x="118.2" y="356.6" text-anchor="middle">14</text>
<text x="118.2" y="290.6" text-anchor="middle">16</text>
<text x="118.2" y="224.7" text-anchor="middle">18</text>
</g>
</svg>
<div style="position:absolute;left:3px;top:1429px;width:1951px;height:1px;background:#f0f8f0"></div>
<div class="lg" style="left:2px;width:122px;background:#0b4618;color:#fff;border-left:none"><span>6,00</span></div>
<div class="lg" style="left:124px;width:122px;background:#225c2d;color:#fff"><span>5,80</span></div>
<div class="lg" style="left:246px;width:122px;background:#3c7446;color:#fff"><span>5,60</span></div>
<div class="lg" style="left:368px;width:122px;background:#578d60;color:#fff"><span>5,40</span></div>
<div class="lg" style="left:490px;width:122px;background:#77a87e;color:#000"><span>5,20</span></div>
<div class="lg" style="left:612px;width:122px;background:#93c199;color:#000"><span>5,00</span></div>
<div class="lg" style="left:734px;width:122px;background:#a9d6ae;color:#000"><span>4,80</span></div>
<div class="lg" style="left:856px;width:122px;background:#c2ebc8;color:#000"><span>4,60</span></div>
<div class="lg" style="left:978px;width:122px;background:#477fa1;color:#fff"><span>4,00</span></div>
<div class="lg" style="left:1100px;width:122px;background:#5b8daf;color:#000"><span>3,45</span></div>
<div class="lg" style="left:1222px;width:122px;background:#709bbb;color:#000"><span>2,90</span></div>
<div class="lg" style="left:1344px;width:122px;background:#8aaac8;color:#000"><span>2,30</span></div>
<div class="lg" style="left:1466px;width:122px;background:#a0bbd6;color:#000"><span>1,70</span></div>
<div class="lg" style="left:1588px;width:122px;background:#b6cae3;color:#000"><span>1,15</span></div>
<div class="lg" style="left:1710px;width:122px;background:#cdd9ee;color:#000"><span>0,55</span></div>
<div class="lg" style="left:1832px;width:122px;background:#e3e9f8;color:#000"><span>0,00</span></div>
</div></body></html>
